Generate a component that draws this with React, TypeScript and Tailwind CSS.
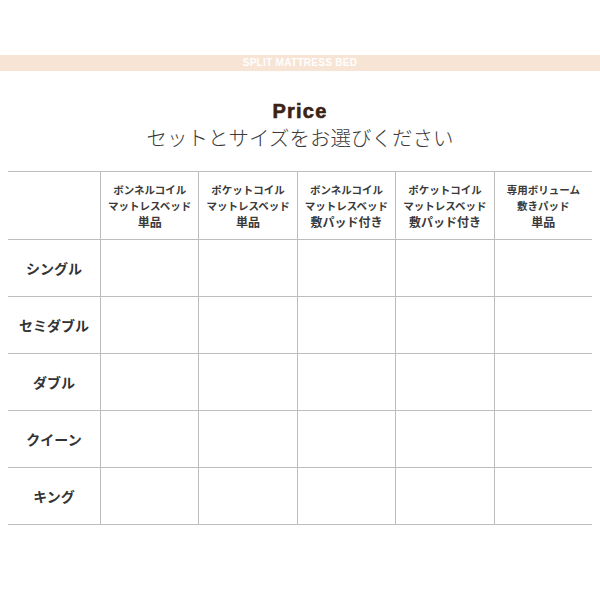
const cols = [
  ["ボンネルコイル", "マットレスベッド", "単品"],
  ["ポケットコイル", "マットレスベッド", "単品"],
  ["ボンネルコイル", "マットレスベッド", "敷パッド付き"],
  ["ポケットコイル", "マットレスベッド", "敷パッド付き"],
  ["専用ボリューム", "敷きパッド", "単品"],
];

const sizes = ["シングル", "セミダブル", "ダブル", "クイーン", "キング"];

const jp = { fontFamily: '"Noto Sans CJK JP", "Noto Sans", sans-serif' };

export default function App() {
  return (
    <div className="w-[600px] h-[600px] bg-white" style={jp}>
      <div className="pt-[55px]">
        <div className="h-[16px] bg-[#f7e4d5] flex items-center justify-center">
          <span
            className="text-[10px] font-bold text-white tracking-[0.03em] leading-none"
            style={{ fontFamily: '"Liberation Sans", Arial, sans-serif' }}
          >
            SPLIT MATTRESS BED
          </span>
        </div>
      </div>

      <div className="mt-[28px] flex flex-col items-center">
        <div
          className="text-[20px] font-black leading-[24px] text-[#3b2314] tracking-[0.06em]"
          style={{ fontFamily: '"Liberation Sans", Arial, sans-serif', WebkitTextStroke: "0.6px #3b2314" }}
        >
          Price
        </div>
        <div className="text-[20.5px] font-light leading-[28px] text-[#3a3a3a]">
          セットとサイズをお選びください
        </div>
      </div>

      <div className="mx-[8px] mt-[20px] border-t border-[#bdbdbd]">
        <div className="grid grid-cols-[92px_repeat(5,1fr)] h-[68px] border-b border-[#bdbdbd]">
          <div />
          {cols.map((c, i) => (
            <div
              key={i}
              className="border-l border-[#bdbdbd] flex flex-col items-center justify-center text-[10.5px] font-bold text-[#3a3a3a]"
            >
              <span className="leading-[16px]">{c[0]}</span>
              <span className="leading-[16px]">{c[1]}</span>
              <span className="text-[12px] leading-[16px]">{c[2]}</span>
            </div>
          ))}
        </div>
        {sizes.map((s) => (
          <div
            key={s}
            className="grid grid-cols-[92px_repeat(5,1fr)] h-[57px] border-b border-[#bdbdbd]"
          >
            <div className="flex items-center justify-center text-[14px] font-bold text-[#333]">
              {s}
            </div>
            {cols.map((_, i) => (
              <div key={i} className="border-l border-[#bdbdbd]" />
            ))}
          </div>
        ))}
      </div>
    </div>
  );
}
